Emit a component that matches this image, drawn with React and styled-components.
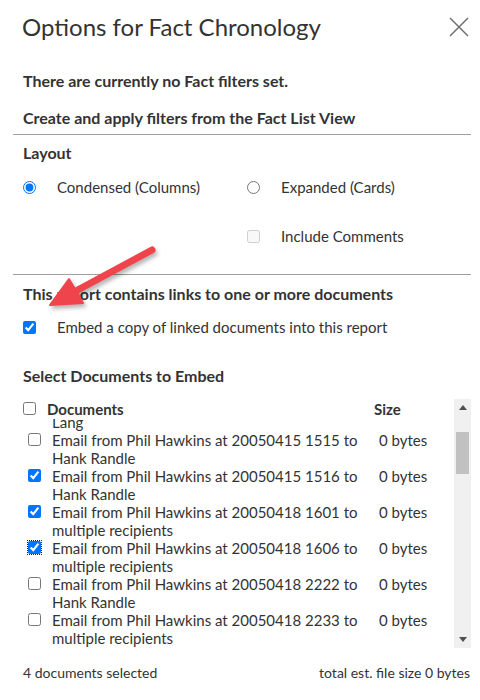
import React, { useLayoutEffect, useRef } from 'react';
import styled, { createGlobalStyle } from 'styled-components';

const GlobalStyle = createGlobalStyle`
  body {
    margin: 0;
    background: #fff;
    font-family: Lato, "Open Sans", sans-serif;
    color: #333;
  }
`;

const Dialog = styled.div`
  position: relative;
  width: 480px;
  height: 700px;
  padding: 0 9px 0 13px;
  box-sizing: border-box;
  overflow: hidden;
`;

const Header = styled.div`
  display: flex;
  align-items: center;
  justify-content: space-between;
  padding: 12px 2px 0 9px;
`;

const Title = styled.h1`
  margin: 0;
  font-size: 24px;
  font-weight: 400;
  line-height: 30px;
  color: #333;
`;

const CloseButton = styled.button`
  width: 20px;
  height: 20px;
  padding: 0;
  border: 0;
  background: none;
  display: flex;
`;

const Section = styled.div`
  padding: 0 10px;
`;

const Heading = styled.div`
  margin-top: ${(p) => p.$mt}px;
  font-size: 16px;
  font-weight: 700;
  line-height: 20px;
  color: #333;
`;

const Divider = styled.hr`
  margin: ${(p) => p.$mt}px 0 0;
  border: 0;
  border-top: 1px solid #a0a0a0;
  height: 0;
`;

const OptionGrid = styled.div`
  margin-top: 14px;
  display: grid;
  grid-template-columns: 224px 1fr;
  row-gap: 29px;
`;

const Option = styled.label`
  display: flex;
  align-items: center;
  gap: 21px;
  margin-top: ${(p) => p.$mt || 0}px;
  height: 20px;
  font-size: 15px;
  color: #333;
  grid-column: ${(p) => p.$col || 'auto'};
`;

const Input = styled.input`
  margin: 0;
  width: 13px;
  height: 13px;
  flex: none;
  outline: ${(p) => (p.$focused ? '1px dotted #222' : 'none')};
  outline-offset: 0;
`;

const Table = styled.div`
  margin: 13px 0 0 10px;
  height: 249px;
  display: flex;
`;

const ScrollArea = styled.div`
  flex: 1;
  overflow: hidden;
`;

const TableHead = styled.div`
  position: sticky;
  top: 0;
  z-index: 1;
  background: #fff;
  height: 19px;
  display: grid;
  grid-template-columns: 13px 316px 1fr;
  column-gap: 11px;
  align-items: center;
  font-size: 15px;
  font-weight: 700;
  padding-bottom: 1px;
`;

const DocRow = styled.div`
  display: grid;
  grid-template-columns: 13px 316px 1fr;
  column-gap: 11px;
  padding-left: 5px;
  height: 36px;
  font-size: 15px;
  line-height: 18px;
  color: #333;

  ${Input} {
    margin-top: 2px;
  }
`;

const DocName = styled.div`
  overflow: hidden;
`;

const DocSize = styled.div`
  white-space: nowrap;
`;

const ScrollBar = styled.div`
  width: 17px;
  flex: none;
  background: #f0f0f0;
  display: flex;
  flex-direction: column;
`;

const ScrollButton = styled.div`
  height: 17px;
  display: flex;
  align-items: center;
  justify-content: center;
`;

const Track = styled.div`
  flex: 1;
  display: flex;
  justify-content: center;
`;

const Thumb = styled.div`
  margin-top: 16px;
  width: 13px;
  height: 42px;
  background: #c1c1c1;
`;

const Footer = styled.div`
  margin-top: 15px;
  padding: 0 1px 0 10px;
  display: flex;
  justify-content: space-between;
  font-size: 14px;
  line-height: 20px;
  color: #333;
`;

const ArrowOverlay = styled.svg`
  position: absolute;
  left: 40px;
  top: 240px;
  overflow: visible;
  pointer-events: none;
  filter: drop-shadow(2px 3px 2px rgba(0, 0, 0, 0.3));
`;

const docs = [
  { name: 'Email from Phil Hawkins at 20050414 0902 to Hank Randle', checked: false },
  { name: 'Email from Phil Hawkins at 20050414 1138 to multiple recipients', checked: false },
  { name: 'Email from Phil Hawkins at 20050415 0845 to Lang', checked: false },
  { name: 'Email from Phil Hawkins at 20050415 1515 to Hank Randle', checked: false },
  { name: 'Email from Phil Hawkins at 20050415 1516 to Hank Randle', checked: true },
  { name: 'Email from Phil Hawkins at 20050418 1601 to multiple recipients', checked: true },
  { name: 'Email from Phil Hawkins at 20050418 1606 to multiple recipients', checked: true, focused: true },
  { name: 'Email from Phil Hawkins at 20050418 2222 to Hank Randle', checked: false },
  { name: 'Email from Phil Hawkins at 20050418 2233 to multiple recipients', checked: false },
  { name: 'Email from Phil Hawkins at 20050419 0915 to Hank Randle', checked: false },
  { name: 'Email from Phil Hawkins at 20050419 1040 to multiple recipients', checked: false },
];

const CloseIcon = () => (
  <svg width="20" height="20" viewBox="0 0 20 20">
    <path d="M1 1 L19 19 M19 1 L1 19" stroke="#6f6f6f" strokeWidth="1.5" fill="none" />
  </svg>
);

const Arrow = () => (
  <ArrowOverlay width="125" height="80" viewBox="0 0 125 80">
    <line x1="112" y1="10" x2="34" y2="52" stroke="#f0444d" strokeWidth="7" strokeLinecap="round" />
    <polygon points="10,65 29,39 43,63" fill="#f0444d" stroke="#f0444d" strokeWidth="2" strokeLinejoin="round" />
  </ArrowOverlay>
);

export default function App() {
  const listRef = useRef(null);

  useLayoutEffect(() => {
    if (listRef.current) listRef.current.scrollTop = 96;
  }, []);

  return (
    <>
      <GlobalStyle />
      <Dialog>
        <Header>
          <Title>Options for Fact Chronology</Title>
          <CloseButton aria-label="Close">
            <CloseIcon />
          </CloseButton>
        </Header>

        <Section>
          <Heading $mt={29}>There are currently no Fact filters set.</Heading>
          <Heading $mt={17}>Create and apply filters from the Fact List View</Heading>
        </Section>
        <Divider $mt={6} />

        <Section>
          <Heading $mt={8}>Layout</Heading>
          <OptionGrid>
            <Option>
              <Input type="radio" name="layout" defaultChecked />
              Condensed (Columns)
            </Option>
            <Option>
              <Input type="radio" name="layout" />
              Expanded (Cards)
            </Option>
            <Option $col="2">
              <Input type="checkbox" disabled />
              Include Comments
            </Option>
          </OptionGrid>
        </Section>
        <Divider $mt={28} />

        <Section>
          <Heading $mt={9}>This report contains links to one or more documents</Heading>
          <Option $mt={13}>
            <Input type="checkbox" defaultChecked />
            Embed a copy of linked documents into this report
          </Option>
          <Heading $mt={29}>Select Documents to Embed</Heading>
        </Section>

        <Table>
          <ScrollArea ref={listRef}>
            <TableHead>
              <Input type="checkbox" />
              <span>Documents</span>
              <span>Size</span>
            </TableHead>
            {docs.map((doc) => (
              <DocRow key={doc.name}>
                <Input type="checkbox" defaultChecked={doc.checked} $focused={doc.focused} />
                <DocName>{doc.name}</DocName>
                <DocSize>0 bytes</DocSize>
              </DocRow>
            ))}
          </ScrollArea>
          <ScrollBar>
            <ScrollButton>
              <svg width="8" height="5" viewBox="0 0 8 5">
                <polygon points="0,5 4,0 8,5" fill="#505050" />
              </svg>
            </ScrollButton>
            <Track>
              <Thumb />
            </Track>
            <ScrollButton>
              <svg width="8" height="5" viewBox="0 0 8 5">
                <polygon points="0,0 8,0 4,5" fill="#505050" />
              </svg>
            </ScrollButton>
          </ScrollBar>
        </Table>

        <Footer>
          <span>4 documents selected</span>
          <span>total est. file size 0 bytes</span>
        </Footer>

        <Arrow />
      </Dialog>
    </>
  );
}
